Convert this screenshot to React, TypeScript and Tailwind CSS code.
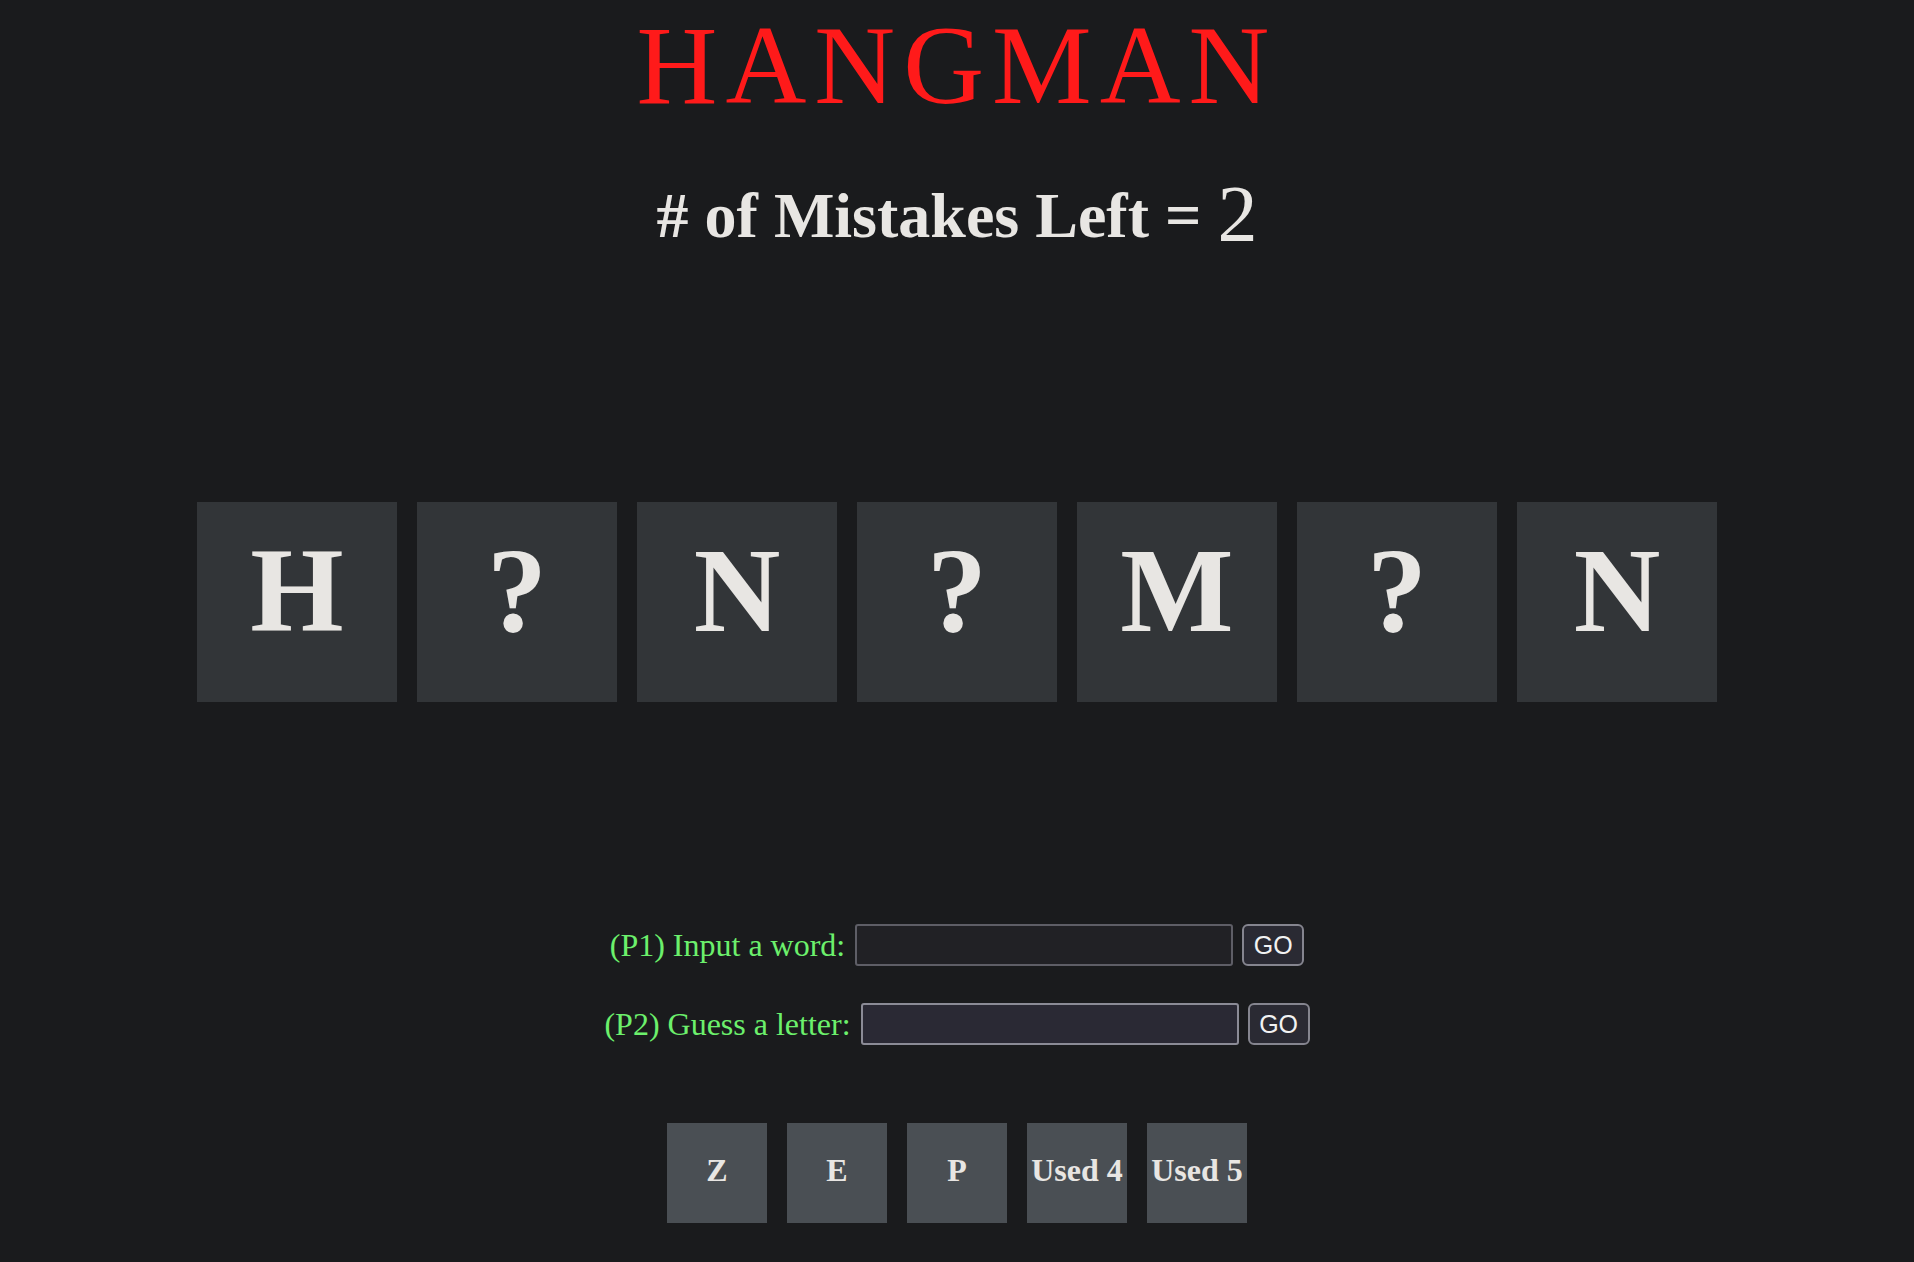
const word = ["H", "?", "N", "?", "M", "?", "N"];
const used = ["Z", "E", "P", "Used 4", "Used 5"];

function LetterTile({ letter }: { letter: string }) {
  return (
    <div className="w-[200px] h-[200px] bg-[#323538] flex items-center justify-center pb-[23px] text-[120px] leading-[120px] font-bold text-[#e8e6e3]">
      {letter}
    </div>
  );
}

function InputRow({ label, focused }: { label: string; focused?: boolean }) {
  return (
    <div className="flex items-center h-[42px]">
      <label className="text-[32px] leading-none text-[#6cf06c] mr-[10px]">{label}</label>
      <input
        type="text"
        className={
          focused
            ? "w-[378px] h-[42px] rounded-[3px] border-2 border-[#8b8b96] bg-[#2a2934] outline-none"
            : "w-[378px] h-[42px] rounded-[3px] border-2 border-[#5e5e66] bg-[#212125] outline-none"
        }
      />
      <button className="ml-[9px] w-[62px] h-[42px] rounded-[6px] border-2 border-[#85858f] bg-[#2a2a33] text-[25px] text-[#f2f2f2] font-['Liberation_Sans',Arial,sans-serif] leading-none">
        GO
      </button>
    </div>
  );
}

export default function App() {
  return (
    <div className="min-h-[1262px] bg-[#1a1b1d] font-['Liberation_Serif','Times_New_Roman',serif] flex flex-col items-center">
      <h1 className="mt-[3px] text-[112px] leading-[124px] tracking-[8px] text-[#ff1a1a]">HANGMAN</h1>

      <div className="mt-[43px] flex items-baseline text-[#e8e6e3]">
        <h2 className="text-[64px] leading-none font-bold whitespace-pre"># of Mistakes Left = </h2>
        <span className="text-[80px] leading-none translate-y-[4px]">2</span>
      </div>

      <div className="mt-[252px] flex gap-[20px]">
        {word.map((l, i) => (
          <LetterTile key={i} letter={l} />
        ))}
      </div>

      <div className="mt-[222px] flex flex-col items-center gap-[37px]">
        <InputRow label="(P1) Input a word:" />
        <InputRow label="(P2) Guess a letter:" focused />
      </div>

      <div className="mt-[78px] flex gap-[20px]">
        {used.map((u) => (
          <div
            key={u}
            className="w-[100px] h-[100px] bg-[#4a4f54] flex items-center justify-center pb-[6px] text-[32px] leading-none font-bold text-[#e8e6e3] whitespace-nowrap"
          >
            {u}
          </div>
        ))}
      </div>
    </div>
  );
}
